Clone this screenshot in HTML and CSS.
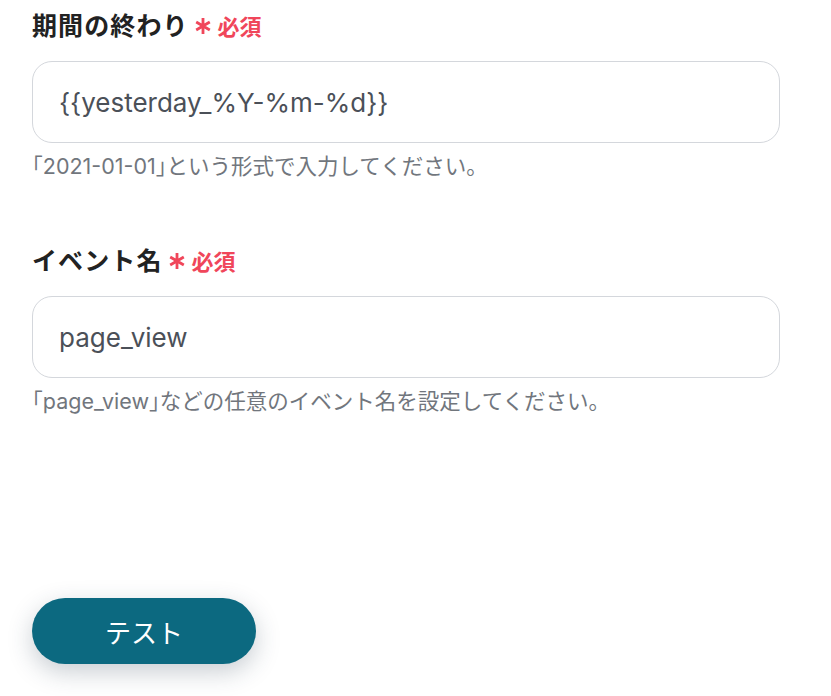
FILE: index.html
```html
<!DOCTYPE html>
<html lang="ja">
<head>
<meta charset="utf-8">
<link rel="stylesheet" href="styles.css">
</head>
<body>
<main class="form">
  <section class="field">
    <div class="label">
      <span class="label-text">期間の終わり</span>
      <svg class="req-star" width="18" height="20" viewBox="0 0 18 20" aria-hidden="true"><path d="M9 2V18M2.2 6L15.8 14M2.2 14L15.8 6" stroke="#f0465a" stroke-width="2.8" stroke-linecap="butt"/></svg>
      <span class="req-text">必須</span>
    </div>
    <div class="input">{{yesterday_%Y-%m-%d}}</div>
    <p class="help"><span class="br">「</span>2021-01-01<span class="br">」</span>という形式で入力してください。</p>
  </section>
  <section class="field second">
    <div class="label">
      <span class="label-text">イベント名</span>
      <svg class="req-star" width="18" height="20" viewBox="0 0 18 20" aria-hidden="true"><path d="M9 2V18M2.2 6L15.8 14M2.2 14L15.8 6" stroke="#f0465a" stroke-width="2.8" stroke-linecap="butt"/></svg>
      <span class="req-text">必須</span>
    </div>
    <div class="input">page_view</div>
    <p class="help"><span class="br">「</span>page_view<span class="br">」</span>などの任意のイベント名を設定してください。</p>
  </section>
  <div class="actions">
    <button class="btn">テスト</button>
  </div>
</main>
</body>
</html>
```

FILE: styles.css
```css
* { box-sizing: border-box; }
html, body { margin: 0; padding: 0; background: #ffffff; }
body {
  font-family: Inter, "Noto Sans CJK JP", sans-serif;
  width: 831px;
  height: 696px;
  overflow: hidden;
}
.form {
  padding: 6px 51px 0 32px;
  display: flex;
  flex-direction: column;
}
.field { display: flex; flex-direction: column; }
.field.second { margin-top: 61px; }
.label {
  display: flex;
  align-items: center;
  height: 36px;
}
.label-text {
  font-family: "Noto Sans CJK JP", sans-serif;
  font-weight: 700;
  font-size: 25px;
  letter-spacing: 1.1px;
  color: #222222;
}
.req-star {
  margin-left: 5px;
  margin-top: 4px;
  flex: none;
}
.req-text {
  font-family: "Noto Sans CJK JP", sans-serif;
  color: #f0465a;
  font-size: 22px;
  font-weight: 700;
  margin-left: 6px;
  margin-top: 2px;
}
.input {
  margin-top: 19px;
  height: 82px;
  border: 1px solid #d4d7dc;
  border-radius: 20px;
  padding: 0 26px;
  display: flex;
  align-items: center;
  font-size: 26px;
  color: #4b5058;
}
.help {
  margin: 8px 0 0 0;
  font-size: 21.5px;
  color: #71767d;
  line-height: 28px;
}
.br {
  font-family: "Noto Sans CJK JP", sans-serif;
  font-feature-settings: "halt";
}
.actions {
  margin-top: 183px;
}
.btn {
  width: 224px;
  height: 66px;
  border: none;
  border-radius: 33px;
  background: #0c6980;
  color: #ffffff;
  font-family: "Noto Sans CJK JP", sans-serif;
  font-size: 26px;
  box-shadow: 0 8px 24px rgba(40, 60, 80, 0.25);
}
```
